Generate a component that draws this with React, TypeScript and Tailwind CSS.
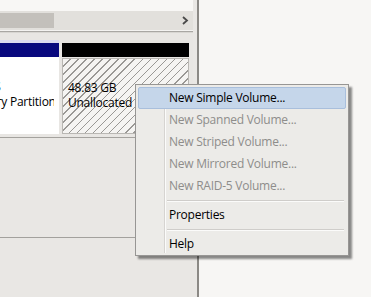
import React from 'react';

const menuItems = [
  { label: 'New Simple Volume...', enabled: true, active: true },
  { label: 'New Spanned Volume...', enabled: false },
  { label: 'New Striped Volume...', enabled: false },
  { label: 'New Mirrored Volume...', enabled: false },
  { label: 'New RAID-5 Volume...', enabled: false },
];

function MenuItem({ label, enabled = true, active = false }: { label: string; enabled?: boolean; active?: boolean }) {
  return (
    <div
      className={`h-[22px] flex items-center rounded-[2px] border ${
        active ? 'bg-[#c5d6ea] border-[#a9bfdc]' : 'border-transparent'
      }`}
    >
      <span className={`pl-[30px] ${enabled ? 'text-black' : 'text-[#8e8d8b]'}`}>{label}</span>
    </div>
  );
}

function Separator() {
  return (
    <div className="h-[7px] flex flex-col justify-center pl-[29px] pr-[2px]">
      <div className="h-px bg-[#cfcdca]" />
      <div className="h-px bg-[#fbfbfa]" />
    </div>
  );
}

export default function App() {
  return (
    <div
      className="relative w-[371px] h-[297px] overflow-hidden flex bg-[#f7f6f4] text-[12px] tracking-[-0.25px]"
      style={{ fontFamily: '"Open Sans", "Noto Sans", sans-serif' }}
    >
      {/* Left pane */}
      <div className="w-[193px] flex flex-col bg-[#e8e6e3]">
        {/* list view bottom */}
        <div className="h-[11px] bg-[#f8f7f5]" />
        {/* horizontal scrollbar */}
        <div className="h-[19px] bg-[#e2e0dc] flex items-center">
          <div className="w-[54px] h-[15px] bg-[#c3c0bb]" />
          <div className="flex-1" />
          <svg width="8" height="9" viewBox="0 0 8 9" className="mr-[4px]">
            <path d="M2 1 L6 4.5 L2 8" fill="none" stroke="#4a4a4a" strokeWidth="1.8" />
          </svg>
        </div>
        {/* splitter */}
        <div className="h-[3px] flex flex-col">
          <div className="h-px bg-[#f4f3f1]" />
          <div className="h-px bg-[#a9a7a3]" />
          <div className="h-px bg-[#d8d6d2]" />
        </div>
        <div className="h-[7px]" />
        {/* disk bar */}
        <div className="flex h-[98px] border-b border-[#a4a29e] pr-[4px] bg-[#e8e6e3]">
          <div className="w-[59px] flex flex-col">
            <div className="h-[3px] bg-[#dcdaf0]" />
            <div className="h-[14px] bg-[#08087e]" />
            <div className="flex-1 bg-white mb-[3px]">
              <div className="w-[54px] overflow-hidden flex flex-col pt-[22px] leading-[15px] whitespace-nowrap">
                <div className="-ml-[78px]">29.66 GB NTFS</div>
                <div className="flex justify-end">
                  <span className="-mr-[5px]">Healthy (Primary Partition)</span>
                </div>
              </div>
            </div>
          </div>
          <div className="w-[3px]" />
          <div className="flex-1 flex flex-col">
            <div className="h-[3px] bg-[#e6e4e0]" />
            <div className="h-[14px] bg-black" />
            <div className="flex-1 mt-[1px] mb-[3px] border border-[#b9b7b3] bg-[repeating-linear-gradient(135deg,#f5f4f2_0px,#f5f4f2_4.6px,#9a9895_4.6px,#9a9895_5.7px)] pl-[5px] pt-[21px] leading-[15px] text-black">
              <div>48.83 GB</div>
              <div>Unallocated</div>
            </div>
          </div>
        </div>
        <div className="h-[100px] border-b border-[#a3a19d] bg-[#e9e7e4]" />
        <div className="flex-1 bg-[#e9e7e4]" />
      </div>

      {/* vertical splitter */}
      <div className="w-[6px] flex">
        <div className="w-[4px] bg-[#e9e7e4]" />
        <div className="w-[2px] bg-[#8b8985]" />
      </div>

      {/* right pane */}
      <div className="flex-1 bg-[#f7f6f4]" />

      {/* context menu */}
      <div className="absolute left-[135px] top-[84px] w-[214px] h-[172px] bg-[#ecebe8] border border-[#979694] shadow-[3px_3px_2px_rgba(0,0,0,0.45)] p-[2px]">
        <div className="absolute left-[28px] top-[2px] bottom-[2px] w-[2px] flex">
          <div className="w-px bg-[#d6d4d1]" />
          <div className="w-px bg-[#fbfbfa]" />
        </div>
        <div className="relative flex flex-col">
          {menuItems.map((m) => (
            <MenuItem key={m.label} label={m.label} enabled={m.enabled} active={m.active} />
          ))}
          <Separator />
          <MenuItem label="Properties" />
          <Separator />
          <MenuItem label="Help" />
        </div>
      </div>
    </div>
  );
}
